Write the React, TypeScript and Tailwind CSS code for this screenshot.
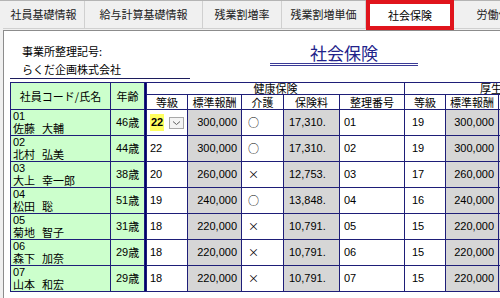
import React from 'react';

const tabs = [
  { label: '社員基礎情報', w: 'w-[82px]' },
  { label: '給与計算基礎情報', w: 'w-[118px]' },
  { label: '残業割増率', w: 'w-[79px]' },
  { label: '残業割増単価', w: 'w-[84px]' },
  { label: '社会保険', w: 'w-[88px]', active: true },
  { label: '労働保険', w: 'w-[90px]' },
];

const rows = [
  { code: '01', last: '佐藤', first: '大輔', age: '46', grade: '22', std: '300,000', care: '○', fee: '17,310.', no: '01', pGrade: '19', pStd: '300,000' },
  { code: '02', last: '北村', first: '弘美', age: '44', grade: '22', std: '300,000', care: '○', fee: '17,310.', no: '02', pGrade: '19', pStd: '300,000' },
  { code: '03', last: '大上', first: '幸一郎', age: '38', grade: '20', std: '260,000', care: '×', fee: '12,753.', no: '03', pGrade: '17', pStd: '260,000' },
  { code: '04', last: '松田', first: '聡', age: '51', grade: '19', std: '240,000', care: '○', fee: '13,848.', no: '04', pGrade: '16', pStd: '240,000' },
  { code: '05', last: '菊地', first: '智子', age: '31', grade: '18', std: '220,000', care: '×', fee: '10,791.', no: '05', pGrade: '15', pStd: '220,000' },
  { code: '06', last: '森下', first: '加奈', age: '29', grade: '18', std: '220,000', care: '×', fee: '10,791.', no: '06', pGrade: '15', pStd: '220,000' },
  { code: '07', last: '山本', first: '和宏', age: '29', grade: '18', std: '220,000', care: '×', fee: '10,791.', no: '07', pGrade: '15', pStd: '220,000' },
];

const num = "font-['Liberation_Sans_Narrow','Liberation_Sans',sans-serif] text-[11px]";

function HeadCell({ children }: { children: React.ReactNode }) {
  return <div className="flex items-center justify-center bg-white text-[11px] leading-none">{children}</div>;
}

export default function App() {
  return (
    <div className="w-[500px] h-[298px] overflow-hidden bg-[#f0f0f0] text-black font-['Noto_Sans_CJK_JP',sans-serif]">
      {/* tab strip */}
      <div className="flex h-[30px] pl-[3px] border-t border-[#b4b4b4]">
        {tabs.map((t) =>
          t.active ? (
            <div
              key={t.label}
              className={`${t.w} shrink-0 -mt-px h-[30px] flex items-center justify-center bg-white border-[4px] border-[#e0141c] text-[11px]`}
            >
              {t.label}
            </div>
          ) : (
            <div
              key={t.label}
              className={`${t.w} shrink-0 h-[28px] flex items-center justify-center border-r border-b border-[#d0d0d0] text-[11px] text-[#222]`}
            >
              {t.label}
            </div>
          ),
        )}
      </div>

      {/* panel */}
      <div className="ml-[3px] h-[268px] border-l border-t border-[#8c8c8c] bg-white">
        <div className="flex items-start">
          <div className="ml-[6px] w-[180px] border-b border-[#1c1c5c] pl-[12px] pt-[11px] text-[11px] leading-[18px]">
            <div>事業所整理記号:</div>
            <div>らくだ企画株式会社</div>
          </div>
          <div className="ml-[80px] mt-[11px] w-[148px] border-b-[3px] border-double border-[#3a3a96] text-center text-[17px] leading-[21px] text-[#22228a]">
            社会保険
          </div>
        </div>

        <div className="ml-[6px] mt-[3px] grid w-max grid-cols-[99px_33px_1px_40px_53px_41px_55px_64px_40px_52px_50px_49px] grid-rows-[11px_14px_repeat(7,25px)] gap-px border border-[#1e1e78] bg-[#1e1e78]">
          <div className="row-span-2 flex items-center justify-center bg-[#ccffcc] text-[11px]">社員コード/氏名</div>
          <div className="row-span-2 flex items-center justify-center bg-[#ccffcc] text-[11px]">年齢</div>
          <div className="col-start-3 row-start-1 row-span-9 bg-[#000070]" />
          <div className="col-span-5 flex items-center justify-center bg-white text-[11px] leading-none">健康保険</div>
          <div className="col-span-4 flex items-center justify-center bg-white text-[11px] leading-none">厚生年金</div>
          {['等級', '標準報酬', '介護', '保険料', '整理番号', '等級', '標準報酬', '保険料', '整理番号'].map((h, i) => (
            <HeadCell key={i}>{h}</HeadCell>
          ))}

          {rows.map((r, i) => (
            <React.Fragment key={r.code}>
              <div className="flex flex-col bg-[#ccffcc] pl-[2px]">
                <span className={`${num} mt-px text-[9px] leading-[10px]`}>{r.code}</span>
                <span className="mt-px flex gap-[7px] text-[11px] leading-[13px]">
                  <span>{r.last}</span>
                  <span>{r.first}</span>
                </span>
              </div>
              <div className="flex items-center justify-center bg-[#ccffcc] text-[11px]">
                <span className={num}>{r.age}</span>歳
              </div>
              <div className={`${num} flex items-center bg-white pl-[3px]`}>
                {i === 0 ? (
                  <>
                    <span className="bg-[#ffff60] px-px font-bold">{r.grade}</span>
                    <span className="ml-auto mr-[3px] flex h-[12px] w-[15px] items-center justify-center border border-[#a8a8a8] bg-[#f4f4f4]">
                      <svg width="9" height="6" viewBox="0 0 9 6">
                        <path d="M1 1.5 L4.5 4.5 L8 1.5" fill="none" stroke="#606060" strokeWidth="1" />
                      </svg>
                    </span>
                  </>
                ) : (
                  r.grade
                )}
              </div>
              <div className={`${num} flex items-center justify-end bg-[#d6d6d6] pr-[4px]`}>{r.std}</div>
              <div className="flex items-center bg-white pl-[6px] text-[11px]">{r.care}</div>
              <div className={`${num} flex items-center bg-[#d6d6d6] pl-[5px]`}>{r.fee}</div>
              <div className={`${num} flex items-center bg-white pl-[4px]`}>{r.no}</div>
              <div className={`${num} flex items-center bg-white pl-[7px]`}>{r.pGrade}</div>
              <div className={`${num} flex items-center justify-end bg-[#d6d6d6] pr-[4px]`}>{r.pStd}</div>
              <div className="bg-[#d6d6d6]" />
              <div className="bg-white" />
            </React.Fragment>
          ))}
        </div>
      </div>
    </div>
  );
}
